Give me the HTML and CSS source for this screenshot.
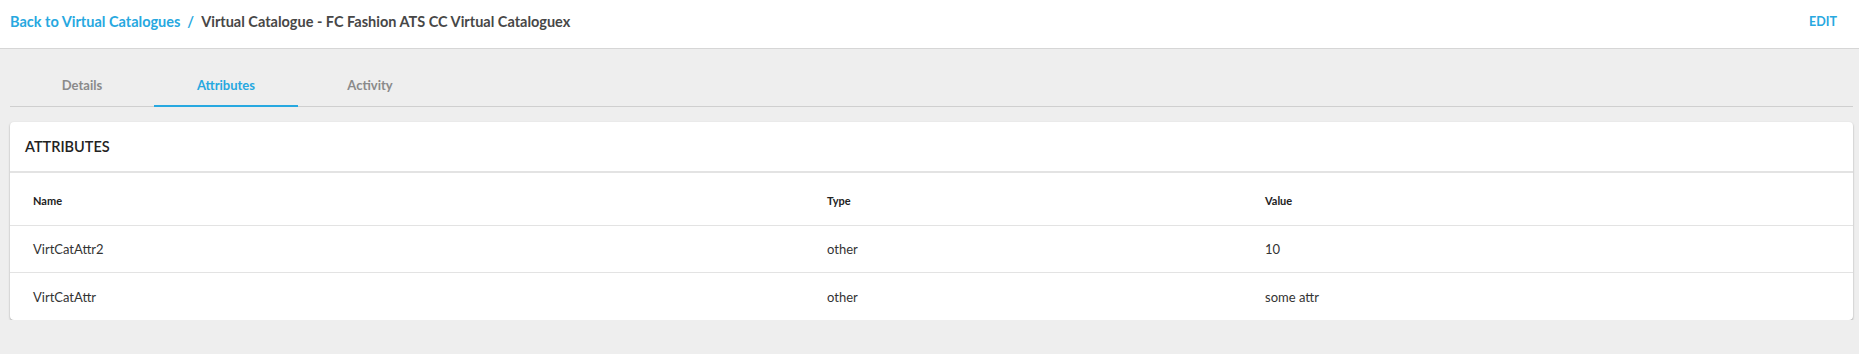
FILE: index.html
```html
<!DOCTYPE html>
<html lang="en">
<head>
    <meta charset="UTF-8">
    <meta name="viewport" content="width=device-width, initial-scale=1.0">
    <title>Virtual Catalogue</title>
    <link rel="stylesheet" href="styles.css">
</head>
<body>
    <header class="topbar">
        <div class="crumbs">
            <a href="#" class="back">Back to Virtual Catalogues</a>
            <span class="sep">/</span>
            <span class="current">Virtual Catalogue - FC Fashion ATS CC Virtual Cataloguex</span>
        </div>
        <a href="#" class="edit">EDIT</a>
    </header>
    <main class="content">
        <nav class="tabs">
            <a href="#" class="tab">Details</a>
            <a href="#" class="tab active">Attributes</a>
            <a href="#" class="tab">Activity</a>
        </nav>
        <section class="card">
            <h2 class="card-title">ATTRIBUTES</h2>
            <div class="row head">
                <div>Name</div>
                <div>Type</div>
                <div>Value</div>
            </div>
            <div class="row">
                <div>VirtCatAttr2</div>
                <div>other</div>
                <div>10</div>
            </div>
            <div class="row">
                <div>VirtCatAttr</div>
                <div>other</div>
                <div>some attr</div>
            </div>
        </section>
    </main>
</body>
</html>
```

FILE: styles.css
```css
*{margin:0;padding:0;box-sizing:border-box}
body{
    background-color: #eeeeee;
    font-family: Lato, "Open Sans", sans-serif;
    color: #333;
}
a{text-decoration: none}

.topbar{
    background-color: #fff;
    height: 49px;
    border-bottom: 1px solid #d6d6d6;
    display: flex;
    align-items: center;
    justify-content: space-between;
    padding: 0 22px 5px 10px;
}
.crumbs{
    display: flex;
    align-items: center;
    font-size: 14.5px;
    font-weight: bold;
}
.crumbs .back{color: #27a8e0}
.crumbs .sep{color: #27a8e0; margin: 0 7px}
.crumbs .current{color: #474747}
.edit{
    color: #27a8e0;
    font-size: 12.5px;
    font-weight: bold;
}

.content{
    padding: 0 6px 0 10px;
}
.tabs{
    display: flex;
    height: 58px;
    border-bottom: 1px solid #cfcfcf;
}
.tab{
    width: 144px;
    display: flex;
    align-items: center;
    justify-content: center;
    padding-top: 15px;
    font-size: 13px;
    font-weight: bold;
    color: #8a8a8a;
    border-bottom: 2px solid transparent;
    margin-bottom: -1px;
}
.tab.active{
    color: #27a8e0;
    border-bottom-color: #27a8e0;
}

.card{
    margin-top: 15px;
    background-color: #fff;
    border-radius: 4px;
    box-shadow: 0 1px 2px rgba(0,0,0,0.35);
}
.card-title{
    height: 51px;
    display: flex;
    align-items: center;
    padding-left: 15px;
    font-size: 14.5px;
    font-weight: 600;
    color: #222;
    border-bottom: 2px solid #e3e3e3;
}
.row{
    display: grid;
    grid-template-columns: 794px 438px 1fr;
    height: 47px;
    align-items: center;
    border-bottom: 1px solid #e3e3e3;
    font-size: 13px;
    color: #333;
}
.row:last-child{border-bottom: none}
.row > div{padding-left: 23px}
.row.head{
    height: 53px;
    padding-top: 2px;
    font-size: 11px;
    font-weight: bold;
    color: #222;
}
```
